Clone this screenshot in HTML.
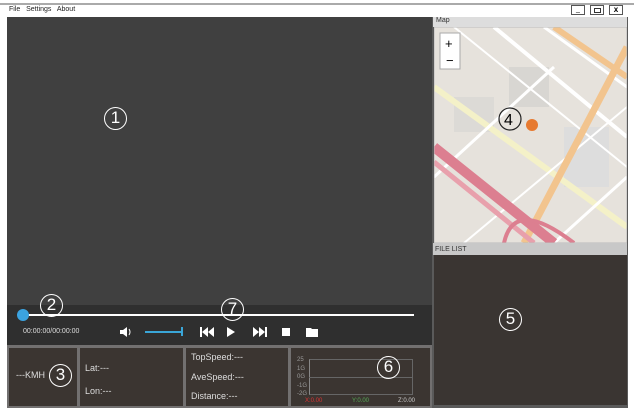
<!DOCTYPE html><html><head><style>
*{margin:0;padding:0;box-sizing:border-box}
body{width:634px;height:415px;background:#fff;position:relative;overflow:hidden;font-family:"Liberation Sans",sans-serif}
.a{position:absolute}
.c{position:absolute;border:1.5px solid #fff;border-radius:50%;color:#fff;font-size:17px;text-align:center;line-height:20px;width:23px;height:23px}
.t{color:#ddd;font-size:9px;position:absolute}
</style></head><body>
<div class="a" style="left:0;top:3px;width:634px;height:2px;background:#aaa"></div>
<div class="a" style="left:9px;top:6px;font-size:7px;color:#222">File&nbsp;&nbsp; Settings&nbsp;&nbsp; About</div>
<div class="a" style="left:571px;top:5px;width:14px;height:10px;border:1px solid #555;font-size:7px;text-align:center;line-height:8px">_</div>
<div class="a" style="left:590px;top:5px;width:14px;height:10px;border:1px solid #555"><div style="margin:2px 3px;width:7px;height:5px;border:1px solid #333"></div></div>
<div class="a" style="left:609px;top:5px;width:14px;height:10px;border:1px solid #555;font-size:8px;text-align:center;line-height:8px;font-weight:bold">x</div>
<div class="a" style="left:7px;top:17px;width:425px;height:288px;background:#404040"></div>
<div class="c" style="left:104px;top:107px">1</div>
<div class="a" style="left:7px;top:305px;width:425px;height:40px;background:#2f2f2f"></div>
<div class="a" style="left:23px;top:314px;width:391px;height:2px;background:#fff"></div>
<div class="a" style="left:17px;top:309px;width:12px;height:12px;border-radius:50%;background:#3ba3e0"></div>
<div class="c" style="left:40px;top:294px">2</div>
<div class="c" style="left:221px;top:298px">7</div>
<div class="t" style="left:23px;top:328px;font-size:7px">00:00:00/00:00:00</div>
<svg class="a" style="left:119px;top:326px" width="14" height="12" fill="#fff"><path d="M1 4h3l4-3v10l-4-3H1z"/><path d="M10 3q2 3 0 6" stroke="#fff" fill="none"/></svg>
<div class="a" style="left:145px;top:331px;width:37px;height:2px;background:#3aa6d8"></div>
<div class="a" style="left:181px;top:327px;width:2px;height:9px;background:#3aa6d8"></div>
<svg class="a" style="left:198px;top:325px" width="125" height="14" fill="#fff">
<rect x="2" y="2" width="2" height="10"/><path d="M10 2v10L4 7zM16 2v10L10 7z"/>
<path d="M29 2v10l8-5z"/>
<path d="M55 2v10l6-5zM61 2v10l6-5z"/><rect x="67" y="2" width="2" height="10"/>
<rect x="84" y="3" width="8" height="8"/>
<path d="M108 3h5l1 1h6v8h-12z"/>
</svg>
<div class="a" style="left:7px;top:345px;width:425px;height:63px;background:#727070"></div>
<div class="a" style="left:9px;top:348px;width:68px;height:58px;background:#3b3531"></div>
<div class="a" style="left:80px;top:348px;width:103px;height:58px;background:#3b3531"></div>
<div class="a" style="left:186px;top:348px;width:102px;height:58px;background:#3b3531"></div>
<div class="a" style="left:291px;top:348px;width:139px;height:58px;background:#3b3531"></div>
<div class="t" style="left:16px;top:370px">---KMH</div>
<div class="c" style="left:49px;top:364px">3</div>
<div class="t" style="left:85px;top:363px">Lat:---</div>
<div class="t" style="left:85px;top:386px">Lon:---</div>
<div class="t" style="left:191px;top:352px">TopSpeed:---</div>
<div class="t" style="left:191px;top:372px">AveSpeed:---</div>
<div class="t" style="left:191px;top:391px">Distance:---</div>
<div class="a" style="left:309px;top:359px;width:104px;height:36px;border:1px solid #666;border-left:1px solid #888"></div>
<div class="a" style="left:309px;top:377px;width:104px;height:1px;background:#666"></div>
<div class="t" style="left:297px;top:356px;font-size:6px;line-height:8.5px;color:#999">25<br>1G<br>0G<br>-1G<br>-2G</div>
<div class="c" style="left:377px;top:356px">6</div>
<div class="a" style="left:305px;top:398px;font-size:6px;color:#d33">X:0.00</div>
<div class="a" style="left:352px;top:398px;font-size:6px;color:#5a5">Y:0.00</div>
<div class="a" style="left:398px;top:398px;font-size:6px;color:#ccc">Z:0.00</div>
<div class="a" style="left:432px;top:17px;width:196px;height:391px;background:#5a5a5a"></div>
<div class="a" style="left:433px;top:17px;width:194px;height:10px;background:#ddd;font-size:7px;color:#333;padding-left:3px">Map</div>
<svg class="a" style="left:434px;top:27px" width="193" height="216">
<rect width="193" height="216" fill="#e6e2dc"/>
<rect x="75" y="40" width="40" height="40" fill="#d8d6d2"/>
<rect x="130" y="100" width="45" height="60" fill="#ddd"/>
<rect x="20" y="70" width="40" height="35" fill="#dcdad6"/>
<path d="M0 60 L193 200" stroke="#f4f1c8" stroke-width="6"/>
<path d="M60 0 L193 110" stroke="#fff" stroke-width="4"/>
<path d="M20 0 L193 140" stroke="#fff" stroke-width="2"/>
<path d="M110 0 L193 60" stroke="#fff" stroke-width="3"/>
<path d="M0 150 L120 40" stroke="#fff" stroke-width="3"/>
<path d="M30 216 L193 80" stroke="#fff" stroke-width="2"/>
<path d="M120 216 L193 150" stroke="#fff" stroke-width="3"/>
<path d="M120 0 L193 50" stroke="#f2c48e" stroke-width="6"/>
<path d="M193 20 L90 216" stroke="#f2c48e" stroke-width="7"/>
<path d="M0 120 L120 216" stroke="#dc7f90" stroke-width="10"/>
<path d="M0 135 L100 216" stroke="#e8a0ac" stroke-width="5"/>
<path d="M70 216 Q80 170 140 216" stroke="#dc7f90" stroke-width="4" fill="none"/>
<rect x="0" y="0" width="193" height="216" fill="none" stroke="#bbb"/>
<rect x="6" y="6" width="20" height="36" fill="#fff" stroke="#aaa"/>
<text x="11" y="21" font-size="13" font-family="Liberation Sans">+</text>
<text x="12" y="38" font-size="13" font-family="Liberation Sans">−</text>
<circle cx="98" cy="98" r="6" fill="#e77a30"/>
<circle cx="76" cy="92" r="11" fill="none" stroke="#222" stroke-width="1.2"/>
<text x="70" y="98" font-size="16" font-family="Liberation Sans">4</text>
</svg>
<div class="a" style="left:433px;top:243px;width:194px;height:12px;background:#c8c8c8;font-size:7px;color:#333;padding-left:2px;line-height:14px">FILE LIST</div>
<div class="a" style="left:434px;top:255px;width:193px;height:150px;background:#3a3532"></div>
<div class="c" style="left:499px;top:308px">5</div>
</body></html>
